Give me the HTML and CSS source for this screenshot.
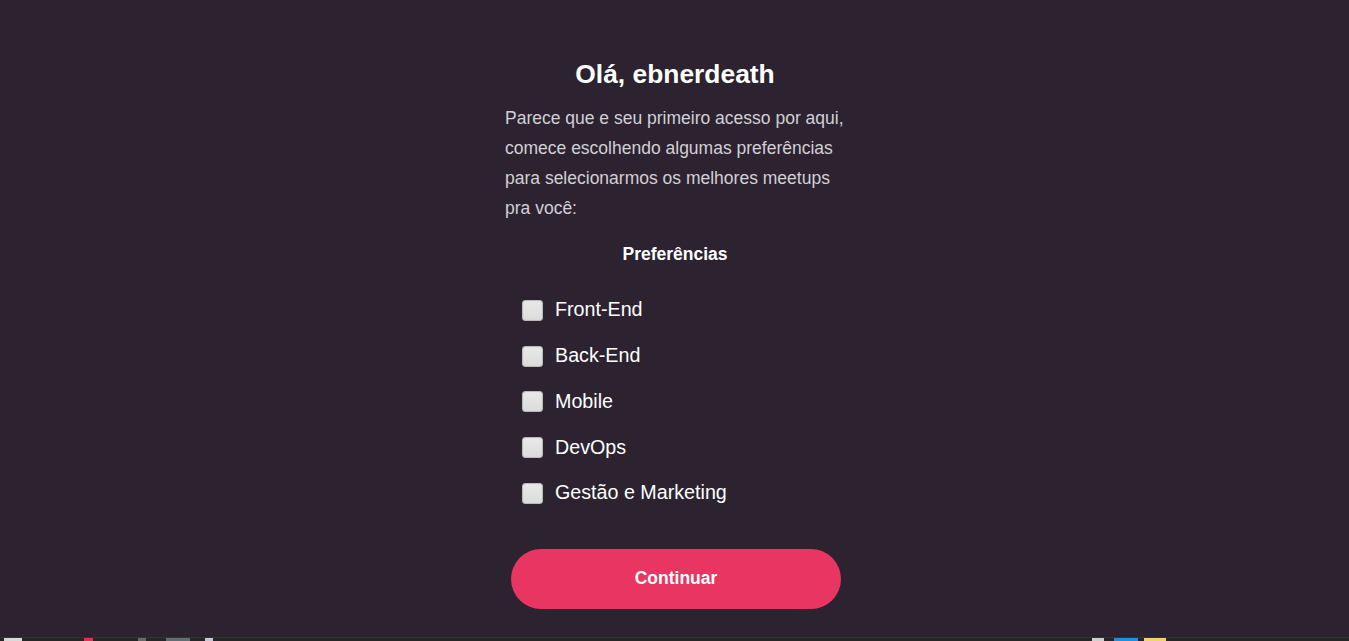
FILE: index.html
```html
<!DOCTYPE html>
<html lang="pt-BR">
<head>
<meta charset="utf-8">
<title>Preferências</title>
<link rel="stylesheet" href="styles.css">
</head>
<body>
<main class="page">
  <section class="welcome">
    <h1 class="title">Olá, ebnerdeath</h1>
    <p class="intro">Parece que e seu primeiro acesso por aqui, comece escolhendo algumas preferências para selecionarmos os melhores meetups pra você:</p>
    <h2 class="subtitle">Preferências</h2>
    <ul class="prefs">
      <li class="pref"><span class="box"></span><span class="label">Front-End</span></li>
      <li class="pref"><span class="box"></span><span class="label">Back-End</span></li>
      <li class="pref"><span class="box"></span><span class="label">Mobile</span></li>
      <li class="pref"><span class="box"></span><span class="label">DevOps</span></li>
      <li class="pref"><span class="box"></span><span class="label">Gestão e Marketing</span></li>
    </ul>
    <button class="cta" type="button">Continuar</button>
  </section>
</main>
<div class="taskbar">
  <span class="tb tb-a"></span>
  <span class="tb tb-b"></span>
  <span class="tb tb-c"></span>
  <span class="tb tb-d"></span>
  <span class="tb tb-e"></span>
  <span class="tb-spacer"></span>
  <span class="tb tb-f"></span>
  <span class="tb tb-g"></span>
  <span class="tb tb-h"></span>
</div>
</body>
</html>
```

FILE: styles.css
```css
html, body {
  margin: 0;
  padding: 0;
  height: 100%;
}
body {
  background: #2c2230;
  font-family: "Liberation Sans", Arial, sans-serif;
  color: #ffffff;
  overflow: hidden;
}
.page {
  display: flex;
  justify-content: center;
}
.welcome {
  width: 340px;
  padding-top: 59px;
  margin-left: 1px;
  display: flex;
  flex-direction: column;
}
.title {
  margin: 0;
  font-size: 26.4px;
  font-weight: bold;
  text-align: center;
  line-height: 30px;
}
.intro {
  margin: 14px 0 0;
  font-size: 17.5px;
  line-height: 30px;
  color: #d3d0d5;
}
.subtitle {
  margin: 21px 0 0;
  font-size: 17.5px;
  line-height: 20px;
  font-weight: bold;
  text-align: center;
}
.prefs {
  list-style: none;
  margin: 23px 0 0;
  padding: 0 0 0 17px;
}
.pref {
  height: 45.75px;
  display: flex;
  align-items: center;
  gap: 12px;
}
.box {
  width: 19px;
  height: 19px;
  border: 1px solid #bababa;
  border-radius: 3px;
  background: linear-gradient(#e8e8e8, #dcdcdc);
  box-shadow: inset 0 0 1px rgba(0,0,0,0.15);
  flex: none;
  margin-top: 1px;
}
.label {
  font-size: 19.7px;
  line-height: 23px;
}
.cta {
  align-self: center;
  margin: 33px 0 0 2px;
  width: 330px;
  height: 60px;
  border: none;
  border-radius: 30px;
  background: #e93562;
  color: #ffffff;
  font-family: "Liberation Sans", Arial, sans-serif;
  font-size: 17.5px;
  font-weight: bold;
  cursor: pointer;
}
.taskbar {
  position: fixed;
  left: 0;
  right: 0;
  bottom: 0;
  height: 3px;
  background: #262626;
  border-top: 1px solid #333333;
  display: flex;
  align-items: flex-start;
}
.tb {
  height: 3px;
  flex: none;
}
.tb-spacer { flex: 1; }
.tb-a { width: 18px; margin-left: 4px; background: #d9d9d9; }
.tb-b { width: 9px; margin-left: 62px; background: #d8384a; }
.tb-c { width: 8px; margin-left: 45px; background: #6a6a6a; }
.tb-d { width: 24px; margin-left: 20px; background: #5f6f72; }
.tb-e { width: 8px; margin-left: 15px; background: #c8c8d8; }
.tb-f { width: 12px; background: #cfcfcf; }
.tb-g { width: 24px; margin-left: 10px; background: #1f8fe0; }
.tb-h { width: 22px; margin-left: 6px; margin-right: 183px; background: #f2d46a; }
```
